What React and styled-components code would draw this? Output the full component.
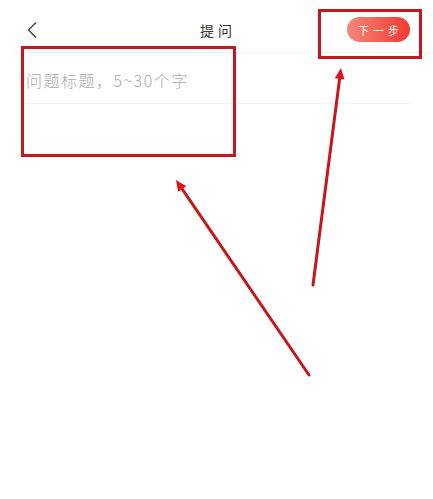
import React from "react";
import styled, { createGlobalStyle } from "styled-components";

const GlobalStyle = createGlobalStyle`
  html, body {
    margin: 0;
    padding: 0;
    background: #fff;
  }
  body {
    font-family: "Noto Sans CJK SC", "Noto Sans", sans-serif;
  }
`;

const Page = styled.div`
  position: relative;
  width: 433px;
  height: 499px;
  overflow: hidden;
  background: #fff;
`;

const Header = styled.header`
  display: grid;
  grid-template-columns: 1fr auto 1fr;
  align-items: center;
  box-sizing: border-box;
  height: 53px;
  margin-left: 12px;
  padding: 7px 23px 0 14px;
  border-bottom: 1px solid #f2f2f2;
`;

const BackButton = styled.button`
  justify-self: start;
  display: flex;
  align-items: center;
  padding: 0;
  border: none;
  background: none;
  color: #333;
`;

const Title = styled.h1`
  margin: 0;
  font-size: 14px;
  font-weight: 400;
  letter-spacing: 4px;
  color: #333;
`;

const NextButton = styled.button`
  justify-self: end;
  width: 63px;
  height: 25px;
  border: none;
  border-radius: 13px;
  background: linear-gradient(90deg, #f5877a 0%, #f3584d 60%, #f23a32 100%);
  color: #fff;
  font-family: inherit;
  font-size: 11px;
  letter-spacing: 4px;
  padding: 0 0 0 4px;
`;

const Form = styled.div`
  padding: 0 23px 0 26px;
`;

const TitleInput = styled.input`
  display: block;
  width: 100%;
  box-sizing: border-box;
  height: 51px;
  padding: 4px 0 0;
  border: none;
  border-bottom: 1px solid #f2f2f2;
  outline: none;
  font-family: inherit;
  font-size: 16px;
  font-weight: 300;
  letter-spacing: 1.5px;
  color: #333;

  &::placeholder {
    color: #aaaaaa;
  }
`;

const Annotations = styled.svg`
  position: absolute;
  left: 0;
  top: 0;
  pointer-events: none;
`;

const Arrow = ({ x1, y1, x2, y2 }) => {
  const a = Math.atan2(y2 - y1, x2 - x1);
  const len = 12;
  const spread = 0.42;
  const p1 = [x2 - len * Math.cos(a - spread), y2 - len * Math.sin(a - spread)];
  const p2 = [x2 - len * Math.cos(a + spread), y2 - len * Math.sin(a + spread)];
  const bx = x2 - 9 * Math.cos(a);
  const by = y2 - 9 * Math.sin(a);
  return (
    <g>
      <line x1={x1} y1={y1} x2={bx} y2={by} stroke="#c8161b" strokeWidth="3" strokeLinecap="round" />
      <polygon points={`${x2},${y2} ${p1[0]},${p1[1]} ${p2[0]},${p2[1]}`} fill="#e8101a" />
    </g>
  );
};

const App = () => {
  return (
    <>
      <GlobalStyle />
      <Page>
        <Header>
          <BackButton aria-label="返回">
            <svg width="12" height="18" viewBox="0 0 12 18">
              <path d="M10 1.5 L2.5 9 L10 16.5" fill="none" stroke="#444" strokeWidth="1.4" />
            </svg>
          </BackButton>
          <Title>提问</Title>
          <NextButton>下一步</NextButton>
        </Header>
        <Form>
          <TitleInput placeholder="问题标题，5~30个字" />
        </Form>

        <Annotations width="433" height="499" viewBox="0 0 433 499">
          <rect x="22.5" y="47.5" width="212" height="108" fill="none" stroke="#c8161b" strokeWidth="3" />
          <rect x="319.5" y="10.5" width="101" height="47" fill="none" stroke="#c8161b" strokeWidth="3" />
          <Arrow x1={309} y1={375} x2={176} y2={180} />
          <Arrow x1={313} y1={285} x2={341} y2={68} />
        </Annotations>
      </Page>
    </>
  );
};

export default App;
